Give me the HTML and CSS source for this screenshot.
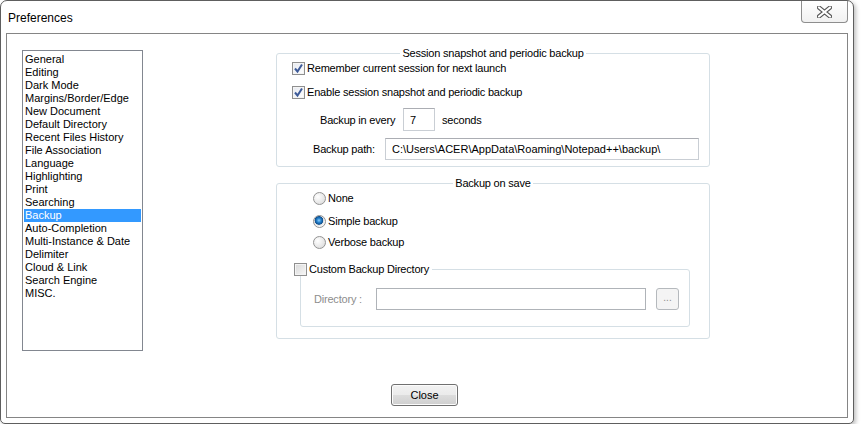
FILE: index.html
```html
<!DOCTYPE html>
<html lang="en">
<head>
    <meta charset="UTF-8">
    <title>Preferences</title>
    <link rel="stylesheet" href="styles.css">
</head>
<body>
    <div class="window">
        <div class="titlebar">
            <span class="title">Preferences</span>
            <button class="close-x" aria-label="Close">
                <svg width="15" height="12" viewBox="0 0 15 12">
                    <path d="M2 1.5 L13 10.5 M13 1.5 L2 10.5" stroke="#555" stroke-width="4.2" stroke-linecap="round"/>
                    <path d="M2 1.5 L13 10.5 M13 1.5 L2 10.5" stroke="#fff" stroke-width="2.2" stroke-linecap="round"/>
                </svg>
            </button>
        </div>
        <div class="client">
            <div class="main">
                <ul class="pages">
                    <li>General</li>
                    <li>Editing</li>
                    <li>Dark Mode</li>
                    <li>Margins/Border/Edge</li>
                    <li>New Document</li>
                    <li>Default Directory</li>
                    <li>Recent Files History</li>
                    <li>File Association</li>
                    <li>Language</li>
                    <li>Highlighting</li>
                    <li>Print</li>
                    <li>Searching</li>
                    <li class="selected">Backup</li>
                    <li>Auto-Completion</li>
                    <li>Multi-Instance &amp; Date</li>
                    <li>Delimiter</li>
                    <li>Cloud &amp; Link</li>
                    <li>Search Engine</li>
                    <li>MISC.</li>
                </ul>

                <div class="settings">
                    <fieldset class="group snapshot">
                        <legend>Session snapshot and periodic backup</legend>
                        <label class="row check-row first">
                            <span class="check checked">
                                <svg width="11" height="11" viewBox="0 0 11 11"><path d="M2 5.5 L4.5 8.5 L9 1.5" fill="none" stroke="#3d5a98" stroke-width="2"/></svg>
                            </span>
                            Remember current session for next launch
                        </label>
                        <label class="row check-row second">
                            <span class="check checked">
                                <svg width="11" height="11" viewBox="0 0 11 11"><path d="M2 5.5 L4.5 8.5 L9 1.5" fill="none" stroke="#3d5a98" stroke-width="2"/></svg>
                            </span>
                            Enable session snapshot and periodic backup
                        </label>
                        <div class="row every-row">
                            <span class="every-label">Backup in every</span>
                            <input class="textbox every-box" type="text" value="7" readonly>
                            <span class="unit">seconds</span>
                        </div>
                        <div class="row path-row">
                            <span class="path-label">Backup path:</span>
                            <input class="textbox path-box" type="text" value="C:\Users\ACER\AppData\Roaming\Notepad++\backup\" readonly>
                        </div>
                    </fieldset>

                    <fieldset class="group on-save">
                        <legend>Backup on save</legend>
                        <label class="row radio-row r-none"><span class="radio"></span>None</label>
                        <label class="row radio-row r-simple"><span class="radio on"></span>Simple backup</label>
                        <label class="row radio-row r-verbose"><span class="radio"></span>Verbose backup</label>

                        <fieldset class="group custom">
                            <legend><span class="check"></span>Custom Backup Directory</legend>
                            <div class="row dir-row">
                                <span class="dir-label">Directory :</span>
                                <input class="textbox dir-box" type="text" value="" disabled>
                                <button class="browse" disabled>...</button>
                            </div>
                        </fieldset>
                    </fieldset>
                </div>
            </div>
            <div class="footer">
                <button class="btn">Close</button>
            </div>
        </div>
    </div>
</body>
</html>
```

FILE: styles.css
```css
body {
    margin: 0;
    background: #fff;
    font-family: "Liberation Sans", Arial, sans-serif;
    font-size: 11px;
    color: #000;
}
.window {
    width: 854px;
    height: 424px;
    box-sizing: border-box;
    border: 1px solid #5e5e5e;
    border-radius: 7px 7px 5px 5px;
    background: #fff;
    padding: 0 5px 5px;
    box-shadow: 2px 2px 4px rgba(0, 0, 0, 0.25);
    display: flex;
    flex-direction: column;
}
.titlebar {
    height: 32px;
    display: flex;
    align-items: flex-start;
}
.title {
    font-size: 12px;
    line-height: 15px;
    padding: 10px 0 0 2px;
}
.close-x {
    margin-left: auto;
    width: 47px;
    height: 22px;
    padding: 0;
    border: 1px solid #8e8e8e;
    border-top: none;
    border-radius: 0 0 4px 4px;
    background: linear-gradient(#ffffff, #f1f1f1);
    display: flex;
    align-items: center;
    justify-content: center;
}
.close-x svg {
    display: block;
    margin-top: 1px;
}
.client {
    height: 385px;
    box-sizing: border-box;
    border: 1px solid #858585;
    display: flex;
    flex-direction: column;
}
.main {
    display: flex;
    align-items: flex-start;
}
.pages {
    list-style: none;
    margin: 16px 0 0 15px;
    padding: 2px 0 0;
    width: 121px;
    height: 301px;
    box-sizing: border-box;
    border: 1px solid #828790;
}
.pages li {
    margin: 0 1px;
    padding-left: 1px;
    height: 13px;
    line-height: 13px;
    white-space: nowrap;
}
.pages li.selected {
    background: #3399ff;
    color: #fff;
}
.settings {
    margin-left: 133px;
    width: 434px;
    letter-spacing: -0.2px;
}
.group {
    margin: 0;
    padding: 0;
    min-width: 0;
    border: 1px solid #d5dfe5;
    border-radius: 3px;
}
.group > legend {
    margin: 0 auto;
    padding: 0 2px;
    line-height: 14px;
}
.snapshot {
    margin-top: 12px;
    padding-bottom: 6px;
}
.row {
    display: flex;
    align-items: center;
    white-space: nowrap;
}
.check-row {
    height: 14px;
    padding-left: 15px;
}
.check-row.first { margin-top: 1px; }
.check-row.second { margin-top: 10px; }
.check {
    width: 13px;
    height: 13px;
    box-sizing: border-box;
    border: 1px solid #8f8f8f;
    background: linear-gradient(135deg, #dcdcdc, #ffffff);
    box-shadow: inset 0 0 0 1px #f4f4f4;
    margin-right: 2px;
    display: flex;
    align-items: center;
    justify-content: center;
    flex-shrink: 0;
}
.check.checked {
    background: linear-gradient(135deg, #e6e9f0, #ffffff);
}
.check svg {
    display: block;
}
.textbox {
    box-sizing: border-box;
    margin: 0;
    padding: 0 0 0 6px;
    font: inherit;
    color: #000;
    background: #fff;
    border: 1px solid #c9ced4;
    border-top-color: #abadb3;
    outline: none;
}
.every-row {
    margin-top: 9px;
    height: 23px;
    padding-left: 43px;
}
.every-label { width: 83px; }
.every-box {
    width: 32px;
    height: 23px;
}
.unit { margin-left: 7px; }
.path-row {
    margin-top: 7px;
    height: 22px;
    padding-left: 36px;
}
.path-label { width: 72px; }
.path-box {
    width: 314px;
    height: 22px;
}
.on-save {
    margin-top: 9px;
    padding-bottom: 11px;
}
.radio-row {
    height: 14px;
    padding-left: 36px;
}
.r-none { margin-top: 1px; }
.r-simple { margin-top: 9px; }
.r-verbose { margin-top: 7px; }
.radio {
    width: 13px;
    height: 13px;
    box-sizing: border-box;
    border-radius: 50%;
    border: 1px solid #939393;
    background: radial-gradient(circle at 35% 35%, #ffffff, #d6d6d6);
    margin-right: 2px;
    flex-shrink: 0;
}
.radio.on {
    background: radial-gradient(circle at 45% 40%, #8fd0ff 0, #2a86d0 2px, #0d4f8f 4px, #e0e0e0 4.6px, #f8f8f8 6px);
}
.custom {
    margin: 13px 0 0 23px;
    width: 390px;
    box-sizing: border-box;
    padding-bottom: 16px;
}
.custom > legend {
    margin: 0 0 0 -7px;
    padding: 0 3px 0 0;
    display: flex;
    align-items: center;
    height: 14px;
}
.custom .check {
    background: linear-gradient(135deg, #d8d8d8, #f8f8f8);
}
.dir-row {
    margin-top: 12px;
    height: 22px;
    padding-left: 13px;
}
.dir-label {
    width: 62px;
    color: #8d8d8d;
}
.dir-box {
    width: 270px;
    height: 22px;
    background: #fff;
    border-color: #afb3b8;
}
.browse {
    margin-left: 10px;
    width: 23px;
    height: 22px;
    padding: 0 0 3px;
    font: inherit;
    font-size: 10px;
    color: #8d8d8d;
    background: #f4f4f4;
    border: 1px solid #b5b9bd;
    border-radius: 3px;
}
.footer {
    margin-top: 33px;
    padding-left: 384px;
}
.btn {
    width: 67px;
    height: 22px;
    padding: 0;
    font: inherit;
    color: #000;
    border: 1px solid #707070;
    border-radius: 3px;
    background: linear-gradient(#f2f2f2 0%, #ebebeb 50%, #dddddd 50%, #cfcfcf 100%);
    box-shadow: inset 0 0 0 1px #fcfcfc;
}
```
